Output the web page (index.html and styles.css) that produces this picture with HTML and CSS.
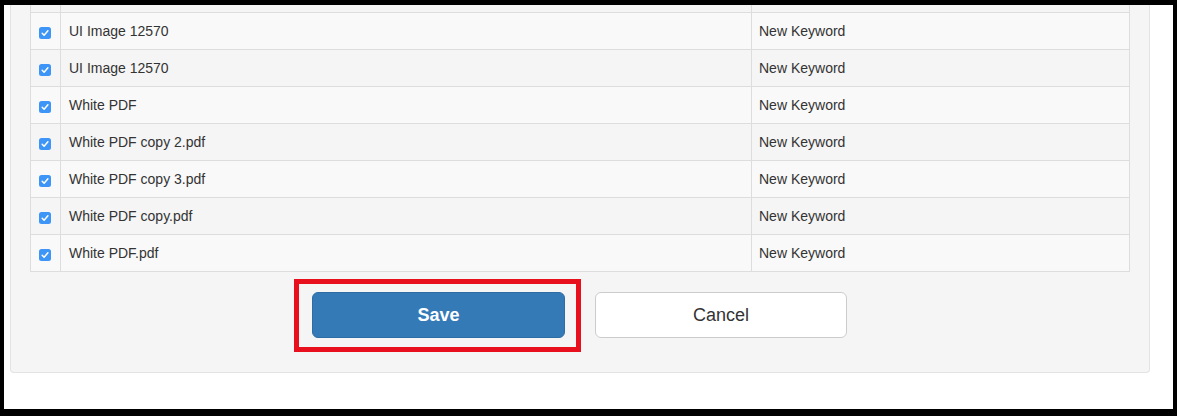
FILE: index.html
```html
<!DOCTYPE html>
<html lang="en">
<head>
  <meta charset="UTF-8">
  <title>Assign Keywords</title>
  <link rel="stylesheet" href="styles.css">
</head>
<body>

  <!-- Window frame -->
  <div class="window">
    <div class="panel">
      <table class="files">
        <colgroup>
          <col class="col-check">
          <col class="col-name">
          <col>
        </colgroup>
        <tbody>
          <!-- row scrolled out of view -->
          <tr><td class="check"></td><td></td><td class="keyword"></td></tr>
          <tr><td class="check"><svg class="box" viewBox="0 0 12 12"><rect width="12" height="12" rx="2.5" fill="#3d95f7"/><path d="M3.2 6.3 L5.1 8.2 L8.9 3.8" fill="none" stroke="#fff" stroke-width="1.5" stroke-linecap="round" stroke-linejoin="round"/></svg></td><td>UI Image 12570</td><td class="keyword">New Keyword</td></tr>
          <tr><td class="check"><svg class="box" viewBox="0 0 12 12"><rect width="12" height="12" rx="2.5" fill="#3d95f7"/><path d="M3.2 6.3 L5.1 8.2 L8.9 3.8" fill="none" stroke="#fff" stroke-width="1.5" stroke-linecap="round" stroke-linejoin="round"/></svg></td><td>UI Image 12570</td><td class="keyword">New Keyword</td></tr>
          <tr><td class="check"><svg class="box" viewBox="0 0 12 12"><rect width="12" height="12" rx="2.5" fill="#3d95f7"/><path d="M3.2 6.3 L5.1 8.2 L8.9 3.8" fill="none" stroke="#fff" stroke-width="1.5" stroke-linecap="round" stroke-linejoin="round"/></svg></td><td>White PDF</td><td class="keyword">New Keyword</td></tr>
          <tr><td class="check"><svg class="box" viewBox="0 0 12 12"><rect width="12" height="12" rx="2.5" fill="#3d95f7"/><path d="M3.2 6.3 L5.1 8.2 L8.9 3.8" fill="none" stroke="#fff" stroke-width="1.5" stroke-linecap="round" stroke-linejoin="round"/></svg></td><td>White PDF copy 2.pdf</td><td class="keyword">New Keyword</td></tr>
          <tr><td class="check"><svg class="box" viewBox="0 0 12 12"><rect width="12" height="12" rx="2.5" fill="#3d95f7"/><path d="M3.2 6.3 L5.1 8.2 L8.9 3.8" fill="none" stroke="#fff" stroke-width="1.5" stroke-linecap="round" stroke-linejoin="round"/></svg></td><td>White PDF copy 3.pdf</td><td class="keyword">New Keyword</td></tr>
          <tr><td class="check"><svg class="box" viewBox="0 0 12 12"><rect width="12" height="12" rx="2.5" fill="#3d95f7"/><path d="M3.2 6.3 L5.1 8.2 L8.9 3.8" fill="none" stroke="#fff" stroke-width="1.5" stroke-linecap="round" stroke-linejoin="round"/></svg></td><td>White PDF copy.pdf</td><td class="keyword">New Keyword</td></tr>
          <tr><td class="check"><svg class="box" viewBox="0 0 12 12"><rect width="12" height="12" rx="2.5" fill="#3d95f7"/><path d="M3.2 6.3 L5.1 8.2 L8.9 3.8" fill="none" stroke="#fff" stroke-width="1.5" stroke-linecap="round" stroke-linejoin="round"/></svg></td><td>White PDF.pdf</td><td class="keyword">New Keyword</td></tr>
        </tbody>
      </table>

      <!-- Actions -->
      <div class="actions">
        <div class="highlight">
          <button class="btn btn-primary">Save</button>
        </div>
        <button class="btn btn-default">Cancel</button>
      </div>
    </div>
  </div>

</body>
</html>
```

FILE: styles.css
```css
* {
  box-sizing: border-box;
}

html,
body {
  margin: 0;
  height: 100%;
}

body {
  font-family: 'Liberation Sans', Arial, Helvetica, sans-serif;
  font-size: 14px;
  color: #333;
  background: #000;
}

.window {
  height: 416px;
  border-style: solid;
  border-color: #000;
  border-width: 5px 4px 7px 4px;
  background: #fff;
  overflow: hidden;
}

.panel {
  margin: -30px 23px 0 6px;
  padding: 0 19px 34px 19px;
  background: #f5f5f5;
  border: 1px solid #e3e3e3;
  border-top: none;
  border-radius: 0 0 4px 4px;
}

.files {
  width: 100%;
  table-layout: fixed;
  border-collapse: collapse;
}

.col-check {
  width: 30px;
}

.col-name {
  width: 691px;
}

.files td {
  height: 37px;
  padding: 8px 7px 8px 8px;
  line-height: 20px;
  border: 1px solid #ddd;
  white-space: nowrap;
}

.files td.keyword {
  padding-left: 7px;
}

.files tr:nth-child(even) td {
  background: #f9f9f9;
}

.files td.check {
  padding: 8px 0;
  text-align: center;
}

.box {
  width: 12px;
  height: 12px;
  display: block;
  margin: 4px 0 0 8px;
}

.actions {
  display: flex;
  justify-content: center;
  gap: 30px;
  margin-top: 20px;
  padding-right: 1px;
}

.highlight {
  position: relative;
}

.highlight::after {
  content: "";
  position: absolute;
  top: -13px;
  bottom: -14px;
  left: -18px;
  right: -16px;
  border: 5px solid #e8101c;
}

.btn {
  display: block;
  height: 46px;
  font-family: inherit;
  font-size: 18px;
  border-radius: 6px;
  cursor: pointer;
}

.btn-primary {
  width: 253px;
  color: #fff;
  font-weight: bold;
  background: #337ab7;
  border: 1px solid #2e6da4;
}

.btn-default {
  width: 252px;
  color: #333;
  background: #fff;
  border: 1px solid #ccc;
}
```
